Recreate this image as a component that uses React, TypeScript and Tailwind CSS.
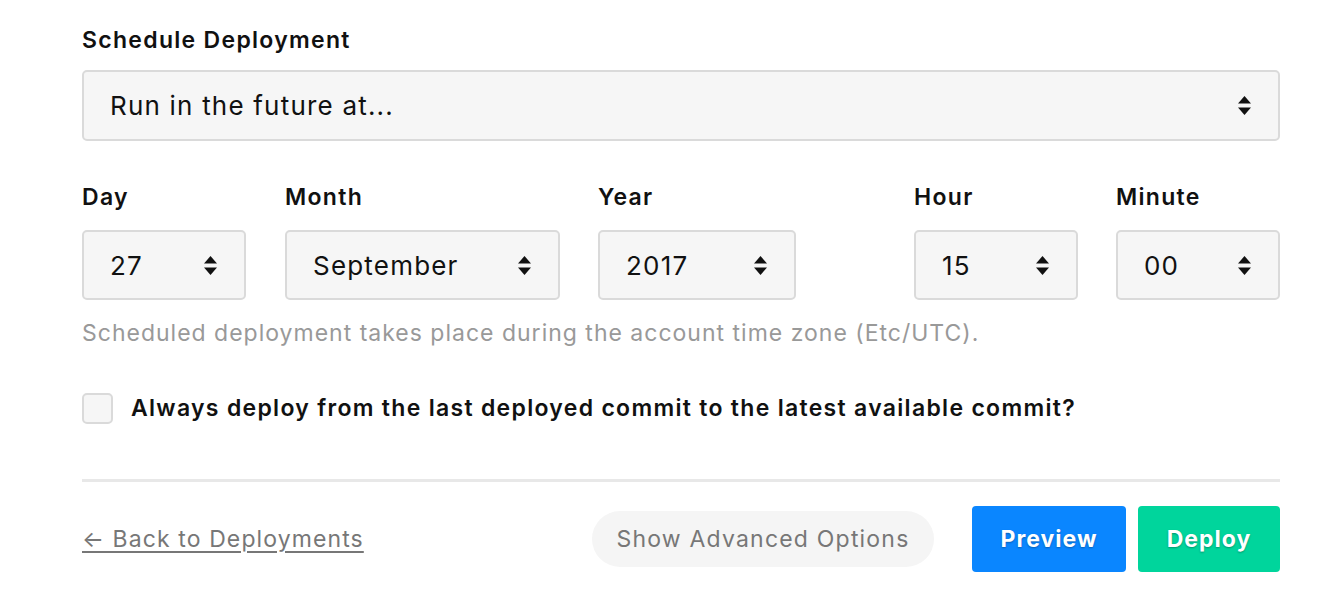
const Arrows = () => (
  <svg width="15" height="21" viewBox="0 0 15 21" className="shrink-0">
    <path d="M7.5 1 L14 8.5 H1 Z" fill="#111" />
    <path d="M7.5 20 L14 12.5 H1 Z" fill="#111" />
  </svg>
);

const Select = ({ value, className }: { value: string; className: string }) => (
  <div
    className={`flex items-center justify-between rounded-[5px] border-2 border-[#dadada] bg-[#f6f6f6] pl-[26px] pr-[26px] text-[26px] tracking-[1.2px] text-[#111] ${className}`}
  >
    <span>{value}</span>
    <Arrows />
  </div>
);

const Field = ({
  label,
  value,
  className,
}: {
  label: string;
  value: string;
  className: string;
}) => (
  <div className={className}>
    <div className="text-[23px] font-semibold leading-[28px] tracking-[1.3px] text-[#111]">{label}</div>
    <Select value={value} className="mt-[19px] h-[70px] w-full" />
  </div>
);

export default function App() {
  return (
    <div className="min-h-[598px] bg-white font-['Inter',sans-serif]">
      <div className="ml-[82px] w-[1198px] pt-[26px]">
        <div className="text-[23px] font-semibold leading-[28px] tracking-[1.3px] text-[#111]">
          Schedule Deployment
        </div>
        <Select value="Run in the future at..." className="mt-[16px] h-[71px] w-full pl-[26px] pr-[25px]" />

        <div className="mt-[42px] flex">
          <Field label="Day" value="27" className="w-[164px]" />
          <Field label="Month" value="September" className="ml-[39px] w-[275px]" />
          <Field label="Year" value="2017" className="ml-[38px] w-[198px]" />
          <Field label="Hour" value="15" className="ml-[118px] w-[164px]" />
          <Field label="Minute" value="00" className="ml-[38px] w-[164px]" />
        </div>

        <p className="mt-[19px] text-[23px] leading-[28px] tracking-[1px] text-[#999]">
          Scheduled deployment takes place during the account time zone (Etc/UTC).
        </p>

        <label className="mt-[46px] flex h-[31px] items-center">
          <span className="h-[31px] w-[31px] rounded-[5px] border-2 border-[#dadada] bg-[#f6f6f6]" />
          <span className="ml-[18px] text-[23px] font-semibold tracking-[1.3px] text-[#111]">
            Always deploy from the last deployed commit to the latest available commit?
          </span>
        </label>

        <div className="mt-[55px] h-[3px] bg-[#e8e8e8]" />

        <div className="mt-[24px] flex h-[66px] items-center">
          <a href="#" className="text-[23px] tracking-[1.1px] text-[#777] underline underline-offset-[4px]">
            ← Back to Deployments
          </a>
          <div className="ml-auto flex items-center">
            <button className="h-[56px] w-[342px] rounded-full bg-[#f5f5f5] text-[23px] tracking-[1.2px] text-[#777]">
              Show Advanced Options
            </button>
            <button className="ml-[38px] h-[66px] w-[154px] rounded-[4px] bg-[#0a86ff] text-[23px] font-bold tracking-[1px] text-white [text-shadow:0_1px_2px_rgba(0,0,0,0.3)]">
              Preview
            </button>
            <button className="ml-[12px] h-[66px] w-[142px] rounded-[4px] bg-[#00d59c] text-[23px] font-bold tracking-[1px] text-white [text-shadow:0_1px_2px_rgba(0,0,0,0.3)]">
              Deploy
            </button>
          </div>
        </div>
      </div>
    </div>
  );
}
